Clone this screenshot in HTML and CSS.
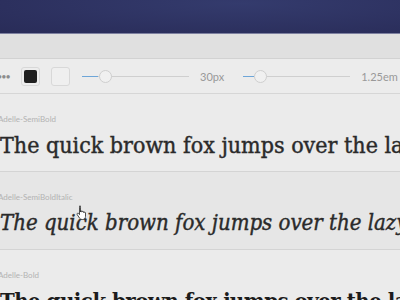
FILE: index.html
```html
<!DOCTYPE html>
<html lang="en">

<head>
  <meta charset="UTF-8">
  <title>Font preview</title>
  <link rel="stylesheet" href="styles.css">
</head>

<body>
  <header class="l-top"></header>
  <div class="l-tabs"></div>

  <div class="c-toolbar">
    <span class="c-toolbar__more">&bull;&bull;&bull;</span>
    <span class="c-swatch c-swatch--dark"><span></span></span>
    <span class="c-swatch c-swatch--light"></span>
    <div class="c-slider">
      <div class="c-slider__track">
        <span class="c-slider__fill" style="width: 16px"></span>
        <span class="c-slider__knob"></span>
      </div>
      <span class="c-slider__value">30px</span>
    </div>
    <div class="c-slider">
      <div class="c-slider__track">
        <span class="c-slider__fill" style="width: 11px"></span>
        <span class="c-slider__knob"></span>
      </div>
      <span class="c-slider__value">1.25em</span>
    </div>
  </div>

  <main class="c-list">
    <section class="c-sample">
      <p class="c-sample__name">Adelle-SemiBold</p>
      <p class="c-sample__text c-sample__text--semibold">The quick brown fox jumps over the lazy dog</p>
    </section>
    <section class="c-sample is-hover">
      <p class="c-sample__name">Adelle-SemiBoldItalic</p>
      <p class="c-sample__text c-sample__text--italic">The quick brown fox jumps over the lazy dog</p>
      <svg class="c-cursor" width="12" height="15" viewBox="0 0 12 15">
        <path d="M3.5 1.2c.6 0 1 .4 1 1V7l.3-1.3c.6 0 1 .4 1 1v.4c.1-.5.5-.8 1-.8s.9.4.9.9v.6c.1-.4.5-.7.9-.7.5 0 .9.4.9.9v3.4c0 1.8-1.3 3.1-3 3.1H6c-1 0-1.8-.5-2.4-1.3L1.2 9.6c-.3-.5-.2-1 .2-1.3.4-.3 1-.2 1.3.2l.8 1.1V2.2c0-.6.4-1 1-1z" fill="#fff" stroke="#222" stroke-width=".8"/>
      </svg>
    </section>
    <section class="c-sample">
      <p class="c-sample__name">Adelle-Bold</p>
      <p class="c-sample__text c-sample__text--bold">The quick brown fox jumps over the lazy dog</p>
    </section>
  </main>
</body>

</html>
```

FILE: styles.css
```css
*,
*::before,
*::after {
  margin: 0;
  box-sizing: border-box;
}

body {
  width: 400px;
  height: 300px;
  overflow: hidden;
  background: #ebebeb;
  font-family: "Lato", "Open Sans", sans-serif;
}

.l-top {
  height: 34px;
  background: radial-gradient(ellipse at 60% 10%, #343b6d 0%, #2c305e 70%, #292c58 100%);
  border-bottom: 1px solid #7d80a0;
}

.l-tabs {
  height: 25px;
  background: #e0e0e0;
  border-bottom: 1px solid #d2d2d2;
}

.c-toolbar {
  height: 35px;
  display: flex;
  align-items: center;
  background: #ececec;
  border-bottom: 1px solid #d6d6d6;
}

.c-toolbar__more {
  width: 24px;
  margin-left: -3px;
  font-size: 9px;
  letter-spacing: -1px;
  color: #8c8c8c;
}

.c-swatch {
  width: 19px;
  height: 19px;
  border: 1px solid #d8d8d8;
  border-radius: 3px;
  background: #ededed;
  display: flex;
  align-items: center;
  justify-content: center;
}

.c-swatch--dark span {
  width: 13px;
  height: 13px;
  border-radius: 2px;
  background: #1f1f1f;
}

.c-swatch--light {
  margin-left: 11px;
  background: #efefef;
}

.c-slider {
  display: flex;
  align-items: center;
  margin-left: 12px;
}

.c-slider + .c-slider {
  margin-left: 19px;
}

.c-slider__track {
  position: relative;
  width: 107px;
  height: 1px;
  background: #cfcfcf;
}

.c-slider__fill {
  display: block;
  height: 1px;
  background: #6ea6d8;
}

.c-slider__knob {
  position: absolute;
  top: -6px;
  left: 17px;
  width: 13px;
  height: 13px;
  border: 1px solid #cfcfcf;
  border-radius: 50%;
  background: #f0f0f0;
}

.c-slider + .c-slider .c-slider__knob {
  left: 11px;
}

.c-slider__value {
  margin-left: 11px;
  font-size: 11px;
  color: #999;
}

.c-sample {
  position: relative;
  height: 78px;
  padding-top: 20px;
  border-bottom: 1px solid #d4d4d4;
  white-space: nowrap;
}

.c-sample.is-hover {
  background: #e6e6e6;
}

.c-sample__name {
  margin-left: -2px;
  font-size: 8px;
  line-height: 10px;
  color: #b3b3b3;
}

.c-sample__text {
  margin-top: 6px;
  font-family: "DejaVu Serif", serif;
  font-stretch: condensed;
  font-size: 22px;
  line-height: 30px;
  -webkit-text-stroke: 0.4px #2a2a2a;
  color: #2a2a2a;
}

.c-sample__text--semibold {
  font-size: 23px;
}

.c-sample__text--italic {
  font-style: italic;
}

.c-sample__text--bold {
  font-weight: 700;
  -webkit-text-stroke: 0;
  letter-spacing: -0.5px;
  color: #1c1c1c;
}

.c-cursor {
  position: absolute;
  left: 76px;
  top: 33px;
}
```
